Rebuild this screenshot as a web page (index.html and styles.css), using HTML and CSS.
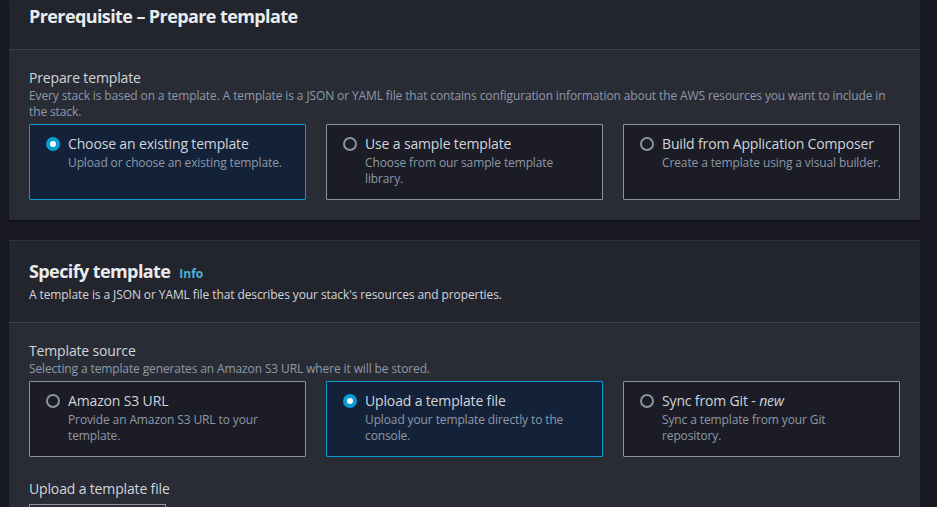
FILE: index.html
```html
<!DOCTYPE html>
<html>
<head>
<meta charset="utf-8">
<link rel="stylesheet" href="styles.css">
</head>
<body>
<div class="page">
  <section class="panel panel-first">
    <header class="panel-header">
      <h2 class="panel-title">Prerequisite – Prepare template</h2>
    </header>
    <div class="panel-body">
      <div class="field-label">Prepare template</div>
      <div class="field-desc">Every stack is based on a template. A template is a JSON or YAML file that contains configuration information about the AWS resources you want to include in the stack.</div>
      <div class="tiles">
        <div class="tile selected">
          <span class="radio on"></span>
          <div class="tile-text">
            <div class="tile-title">Choose an existing template</div>
            <div class="tile-desc">Upload or choose an existing template.</div>
          </div>
        </div>
        <div class="tile">
          <span class="radio"></span>
          <div class="tile-text">
            <div class="tile-title">Use a sample template</div>
            <div class="tile-desc">Choose from our sample template library.</div>
          </div>
        </div>
        <div class="tile">
          <span class="radio"></span>
          <div class="tile-text">
            <div class="tile-title">Build from Application Composer</div>
            <div class="tile-desc">Create a template using a visual builder.</div>
          </div>
        </div>
      </div>
    </div>
  </section>

  <section class="panel panel-second">
    <header class="panel-header header-tall">
      <h2 class="panel-title">Specify template <a class="info">Info</a></h2>
      <div class="header-desc">A template is a JSON or YAML file that describes your stack's resources and properties.</div>
    </header>
    <div class="panel-body">
      <div class="field-label">Template source</div>
      <div class="field-desc">Selecting a template generates an Amazon S3 URL where it will be stored.</div>
      <div class="tiles">
        <div class="tile">
          <span class="radio"></span>
          <div class="tile-text">
            <div class="tile-title">Amazon S3 URL</div>
            <div class="tile-desc">Provide an Amazon S3 URL to your template.</div>
          </div>
        </div>
        <div class="tile selected">
          <span class="radio on"></span>
          <div class="tile-text">
            <div class="tile-title">Upload a template file</div>
            <div class="tile-desc">Upload your template directly to the console.</div>
          </div>
        </div>
        <div class="tile">
          <span class="radio"></span>
          <div class="tile-text">
            <div class="tile-title">Sync from Git - <em>new</em></div>
            <div class="tile-desc">Sync a template from your Git repository.</div>
          </div>
        </div>
      </div>
      <div class="field-label upload-label">Upload a template file</div>
      <div class="file-button"></div>
    </div>
  </section>
</div>
</body>
</html>
```

FILE: styles.css
```css
html, body {
  margin: 0;
  padding: 0;
  height: 100%;
  overflow: hidden;
}

body {
  background: #191a21;
  font-family: "Open Sans", "Noto Sans", sans-serif;
  color: #d1d5db;
}

.page {
  padding: 0 17px 0 9px;
  display: flex;
  flex-direction: column;
  gap: 20px;
}

.panel {
  background: #2a2c35;
  box-shadow: 0 1px 1px rgba(0,0,0,0.5);
}

.panel-header {
  background: #23252e;
  padding: 4px 20px 0 20px;
  height: 45px;
  border-bottom: 1px solid #3f434c;
}

.header-tall {
  padding-top: 18px;
  height: 63px;
  border-top: 1px solid #30333b;
}

.panel-title {
  margin: 0;
  font-size: 18px;
  line-height: 24px;
  font-weight: 700;
  letter-spacing: -0.6px;
  color: #e9ebed;
  display: flex;
  align-items: baseline;
  gap: 9px;
}

.info {
  font-size: 12px;
  font-weight: 700;
  letter-spacing: 0;
  color: #42b4d6;
}

.header-desc {
  font-size: 12px;
  line-height: 16px;
  letter-spacing: -0.1px;
  color: #d1d5db;
  margin-top: 1px;
}

.panel-body {
  padding: 18px 20px 20px 20px;
}

.field-label {
  font-size: 14px;
  line-height: 20px;
  letter-spacing: -0.15px;
  color: #d1d5db;
}

.field-desc {
  font-size: 12px;
  line-height: 16px;
  letter-spacing: -0.12px;
  color: #8d99a8;
}

.tiles {
  display: grid;
  grid-template-columns: repeat(3, 1fr);
  gap: 20px;
  margin-top: 4px;
}

.tile {
  height: 76px;
  box-sizing: border-box;
  border: 1px solid #8a939e;
  border-radius: 1px;
  background: #1b1c25;
  display: flex;
  align-items: flex-start;
  gap: 8px;
  padding: 9px 16px 0 16px;
}

.tile.selected {
  border-color: #0a9bd4;
  background: #142239;
}

.radio {
  flex: none;
  width: 14px;
  height: 14px;
  box-sizing: border-box;
  border-radius: 50%;
  border: 2px solid #8a939e;
  margin-top: 3px;
}

.radio.on {
  border: 4px solid #0a9bd4;
  background: #ffffff;
}

.tile-title {
  font-size: 14px;
  line-height: 20px;
  letter-spacing: -0.15px;
  color: #d1d5db;
}

.tile-desc {
  font-size: 12px;
  line-height: 16px;
  letter-spacing: -0.12px;
  color: #8d99a8;
  margin-top: 1px;
}

.upload-label {
  margin-top: 22px;
}

.file-button {
  width: 137px;
  height: 20px;
  box-sizing: border-box;
  border: 1px solid #8a939e;
  border-bottom: none;
  margin-top: 5px;
}
```
